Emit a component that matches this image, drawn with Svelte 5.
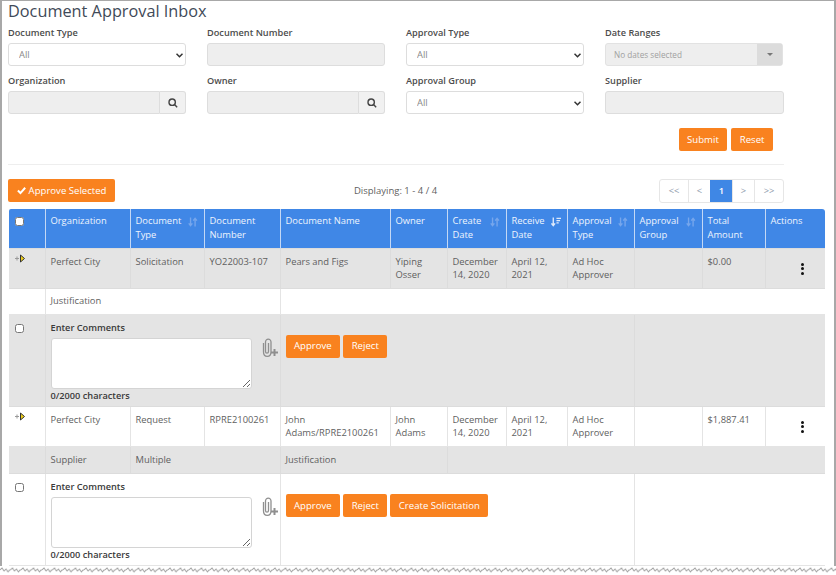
<script>
const columns = [
  { label: "Organization" },
  { label: "Document Type", sort: "none" },
  { label: "Document Number" },
  { label: "Document Name" },
  { label: "Owner" },
  { label: "Create Date", sort: "none" },
  { label: "Receive Date", sort: "desc" },
  { label: "Approval Type", sort: "none" },
  { label: "Approval Group", sort: "none" },
  { label: "Total Amount" },
  { label: "Actions" },
];
const widths = [36, 85, 74, 76, 110, 57, 59, 61, 67, 68, 63, 60];
const pages = ["<<", "<", "1", ">", ">>"];
const docs = [
  ["Perfect City", "Solicitation", "YO22003-107", "Pears and Figs", "Yiping Osser", "December 14, 2020", "April 12, 2021", "Ad Hoc Approver", "", "$0.00"],
  ["Perfect City", "Request", "RPRE2100261", "John Adams/RPRE2100261", "John Adams", "December 14, 2020", "April 12, 2021", "Ad Hoc Approver", "", "$1,887.41"],
];
</script>

{#snippet search()}
  <span class="addon">
    <svg width="10" height="10" viewBox="0 0 12 12" fill="none" stroke="#444" stroke-width="1.700">
      <circle cx="5" cy="5" r="3.800" /><path d="M7.800 7.800 11 11" />
    </svg>
  </span>
{/snippet}

{#snippet allSelect(id)}
  <div class="select-wrap">
    <select {id} class="control"><option>All</option></select>
    <svg class="chevron" width="7" height="5" viewBox="0 0 7 5" fill="none" stroke="#333" stroke-width="1.500">
      <path d="M.5 .8 3.500 3.800 6.500 .8" />
    </svg>
  </div>
{/snippet}

{#snippet docRow(doc, cls)}
  <tr class="doc {cls}">
    <td class="expand">
      <svg width="12" height="10" viewBox="0 0 12 10">
        <path d="M1 5.500h4M3 3.500v4" stroke="#999" stroke-width="1" />
        <path d="M6.500 2 10.500 5.500 6.500 9z" fill="#efcf1c" stroke="#333" stroke-width="1" />
      </svg>
    </td>
    {#each doc as value}
      <td>{value}</td>
    {/each}
    <td class="kebab"><i></i><i></i><i></i></td>
  </tr>
{/snippet}

{#snippet commentRow(cls, extra)}
  <tr class="comment {cls}">
    <td class="check"><input type="checkbox" /></td>
    <td colspan="3">
      <div class="comment-box">
        <div class="comment-main">
          <span class="comment-title">Enter Comments</span>
          <textarea></textarea>
          <span class="comment-count">0/2000 characters</span>
        </div>
        <svg class="clip" width="17" height="20" viewBox="0 0 17 20" fill="none" stroke="#8f8f8f">
          <path stroke-width="1.300" d="M2.500 5v9c0 5.800 7.500 5.800 7.500 0V4C10 .2 4.500 .2 4.500 4v9.500c0 2.200 3 2.200 3 0V5" />
          <path stroke-width="2" d="M10 14.500h7M13.500 11v7" />
        </svg>
      </div>
    </td>
    <td colspan="5" class="comment-actions">
      <div class="action-row">
        <button class="btn">Approve</button>
        <button class="btn">Reject</button>
        {#if extra}<button class="btn">{extra}</button>{/if}
      </div>
    </td>
    <td colspan="4"></td>
  </tr>
{/snippet}

<div class="page">
  <div class="frame">
    <h1>Document Approval Inbox</h1>

    <div class="filters">
      <div class="field">
        <label for="doc-type">Document Type</label>
        {@render allSelect("doc-type")}
      </div>
      <div class="field">
        <label for="doc-number">Document Number</label>
        <input id="doc-number" class="control readonly" disabled />
      </div>
      <div class="field">
        <label for="appr-type">Approval Type</label>
        {@render allSelect("appr-type")}
      </div>
      <div class="field">
        <label for="dates">Date Ranges</label>
        <div id="dates" class="dates">
          <span class="dates-text">No dates selected</span>
          <span class="dates-caret"><b></b></span>
        </div>
      </div>
      <div class="field">
        <label for="org">Organization</label>
        <div class="group">
          <input id="org" class="control readonly" disabled />
          {@render search()}
        </div>
      </div>
      <div class="field">
        <label for="owner">Owner</label>
        <div class="group">
          <input id="owner" class="control readonly" disabled />
          {@render search()}
        </div>
      </div>
      <div class="field">
        <label for="appr-group">Approval Group</label>
        {@render allSelect("appr-group")}
      </div>
      <div class="field">
        <label for="supplier">Supplier</label>
        <input id="supplier" class="control readonly supplier" disabled />
      </div>
    </div>

    <div class="form-actions">
      <button class="btn">Submit</button>
      <button class="btn">Reset</button>
    </div>

    <hr />

    <div class="toolbar">
      <button class="btn approve-all">
        <svg width="10" height="9" viewBox="0 0 10 9" fill="none" stroke="#fff" stroke-width="2.200">
          <path d="M1 4.500 3.800 7.300 9 1.500" />
        </svg>
        <span>Approve Selected</span>
      </button>
      <span class="displaying">Displaying: 1 - 4 / 4</span>
      <div class="pager">
        {#each pages as page}
          <span class:active={page === "1"}>{page}</span>
        {/each}
      </div>
    </div>

    <table>
      <colgroup>
        {#each widths as w}
          <col style="width: {w}px" />
        {/each}
      </colgroup>
      <thead>
        <tr>
          <th class="check"><input type="checkbox" /></th>
          {#each columns as col}
            <th>
              {col.label}
              {#if col.sort}
                <svg class="sort" class:on={col.sort === "desc"} width="10" height="10" viewBox="0 0 11 10" fill="none" stroke="currentColor" stroke-width="1.500">
                  {#if col.sort === "desc"}
                    <path d="M2.500 0v9M.5 6.500l2 2.500 2-2.500M6 1h5M6 3.500h4M6 6h2.500" />
                  {:else}
                    <path d="M2.800 0v9M.8 6.500l2 2.500 2-2.500M7.800 10V1M5.800 3.500l2-2.500 2 2.500" />
                  {/if}
                </svg>
              {/if}
            </th>
          {/each}
        </tr>
      </thead>
      <tbody>
        {@render docRow(docs[0], "grey")}
        <tr class="sub">
          <td></td>
          <td colspan="3">Justification</td>
          <td colspan="8"></td>
        </tr>
        {@render commentRow("grey", "")}
        {@render docRow(docs[1], "")}
        <tr class="sub grey">
          <td></td>
          <td>Supplier</td>
          <td colspan="2">Multiple</td>
          <td colspan="2">Justification</td>
          <td colspan="6"></td>
        </tr>
        {@render commentRow("", "Create Solicitation")}
      </tbody>
    </table>
  </div>

  <svg class="tear" width="836" height="9">
    <defs>
      <pattern id="zig" width="10.500" height="9" patternUnits="userSpaceOnUse">
        <path d="M0 4 2 2 4 5 6 3 8 6 9.500 4 10.500 4" fill="none" stroke="#a0a0a0" stroke-width="1" />
      </pattern>
    </defs>
    <rect width="836" height="9" fill="#fff" />
    <rect width="836" height="9" fill="url(#zig)" />
  </svg>
</div>

<style>
:global(body) {
  margin: 0;
  background: #fff;
}

.page {
  position: relative;
  width: 836px;
  height: 575px;
  overflow: hidden;
}

.frame {
  box-sizing: border-box;
  width: 836px;
  height: 575px;
  padding: 0 0 0 6px;
  border-top: 1px solid #a8a8a8;
  border-left: 2px solid #a8a8a8;
  border-right: 2px solid #a8a8a8;
  font-family: "Open Sans", sans-serif;
  font-size: 9.400px;
  color: #5f5f5f;
}

h1 {
  margin: 1px 0 0;
  font-size: 16.300px;
  font-weight: 400;
  line-height: 19px;
  color: #3f4a58;
}

.filters {
  display: grid;
  grid-template-columns: repeat(4, 178px);
  column-gap: 21px;
  row-gap: 8px;
  margin-top: 5px;
}

.field {
  display: flex;
  flex-direction: column;
  gap: 3px;
}

.field label {
  font-size: 9.200px;
  font-weight: 600;
  line-height: 14px;
  color: #4c4c4c;
}

.control {
  box-sizing: border-box;
  width: 100%;
  height: 23px;
  padding: 0 6px;
  border: 1px solid #ddd;
  border-radius: 3px;
  background: #fff;
  font: inherit;
  color: #888;
}

.select-wrap {
  position: relative;
  display: flex;
}

.select-wrap select {
  appearance: none;
  padding-left: 10px;
}

.chevron {
  position: absolute;
  top: 10px;
  right: 3px;
}

.readonly {
  background: #eee;
}

.supplier {
  width: 179px;
}

.group {
  display: flex;
}

.group .control {
  flex: 1;
  min-width: 0;
  border-radius: 3px 0 0 3px;
}

.addon {
  display: flex;
  align-items: center;
  justify-content: center;
  box-sizing: border-box;
  width: 26px;
  height: 23px;
  border: 1px solid #ddd;
  border-left: 0;
  border-radius: 0 3px 3px 0;
  background: #f1f1f1;
}

.dates {
  display: flex;
  box-sizing: border-box;
  height: 23px;
  border: 1px solid #e2e2e2;
  border-radius: 3px;
  background: #eee;
}

.dates-text {
  flex: 1;
  padding-left: 8px;
  font-size: 8.200px;
  line-height: 21px;
  color: #a0a0a0;
}

.dates-caret {
  display: flex;
  align-items: center;
  justify-content: center;
  width: 25px;
  background: #dcdcdc;
}

.dates-caret b {
  border: 3px solid transparent;
  border-top-color: #777;
  border-bottom: 0;
}

.form-actions {
  display: flex;
  justify-content: flex-end;
  gap: 4px;
  width: 765px;
  margin-top: 14px;
}

.btn {
  box-sizing: border-box;
  height: 23px;
  padding: 0 8.500px;
  border: 0;
  border-radius: 2px;
  background: #f9821f;
  font: inherit;
  font-size: 9.600px;
  color: #fff;
}

hr {
  width: 776px;
  margin: 13px 0 13px;
  border: 0;
  border-top: 1px solid #eee;
}

.toolbar {
  display: flex;
  align-items: center;
  width: 776px;
}

.approve-all {
  display: flex;
  flex-shrink: 0;
  align-items: center;
  gap: 3px;
  width: 107px;
  white-space: nowrap;
}

.displaying {
  flex: 1;
  padding-left: 17px;
  text-align: center;
  font-size: 9.500px;
}

.pager {
  display: flex;
  margin-top: 1px;
  border: 1px solid #e6e6e6;
  border-radius: 3px;
}

.pager span {
  box-sizing: border-box;
  width: 22px;
  height: 22px;
  border-left: 1px solid #e6e6e6;
  text-align: center;
  line-height: 21px;
  color: #8c99aa;
}

.pager span:first-child {
  width: 28px;
  border-left: 0;
}

.pager span:last-child {
  width: 29px;
}

.pager span.active {
  background: #3f87e5;
  border-color: #3f87e5;
  color: #fff;
  font-weight: 600;
}

table {
  width: 816px;
  margin: 6px 0 0 1px;
  table-layout: fixed;
  border-collapse: collapse;
}

thead tr {
  height: 39px;
}

th {
  position: relative;
  padding: 5px;
  vertical-align: top;
  text-align: left;
  font-weight: 400;
  line-height: 13.700px;
  background: #4087e6;
  color: #eef4fd;
  border-left: 1px solid #c4d8f5;
}

th:first-child {
  border-left: 0;
  border-top-left-radius: 2px;
}

th:last-child {
  border-top-right-radius: 3px;
}

.sort {
  position: absolute;
  top: 8px;
  right: 6px;
  color: #76a6ec;
}

.sort.on {
  color: #dfeafb;
}

td {
  padding: 6px 5px;
  vertical-align: top;
  line-height: 13.700px;
  border: 1px solid #e4e4e4;
}

td:first-child {
  border-left: 0;
}

td:last-child {
  border-right: 0;
}

.grey td {
  background: #e4e4e4;
  border-color: #dcdcdc;
}

tr.doc {
  height: 39.500px;
}

tr.doc.grey {
  height: 40.500px;
}

tr.sub {
  height: 25px;
}

tr.sub td {
  padding-top: 5px;
}

tr.sub.grey {
  height: 27px;
}

tr.sub.grey td {
  padding-top: 6px;
}

tr.comment {
  height: 92px;
}

tr.comment td {
  padding-bottom: 0;
}

.check input {
  display: block;
  width: 9px;
  height: 9px;
  margin: 0;
}

th.check {
  padding: 8px 0 0 6px;
}

td.check {
  padding: 9px 0 0 6px;
}

td.expand {
  padding: 4px 0 0 5px;
}

.expand svg {
  display: block;
}

td.kebab {
  padding: 14px 0 0 0;
}

.kebab i {
  display: block;
  width: 3px;
  height: 3px;
  margin: 0 0 1.500px 35px;
  border-radius: 50%;
  background: #111;
}

.comment-box {
  display: flex;
  gap: 9px;
}

.comment-main {
  display: flex;
  flex-direction: column;
  flex-shrink: 0;
  width: 201px;
  font-size: 9.200px;
  font-weight: 600;
  color: #3a3a3a;
}

.comment-title,
.comment-count {
  line-height: 14px;
}

.comment-title {
  margin-bottom: 3px;
}

textarea {
  box-sizing: border-box;
  display: block;
  width: 201px;
  height: 51px;
  border: 1px solid #d4d4d4;
  border-radius: 3px;
  background: #fff;
}

.clip {
  flex-shrink: 0;
  margin-top: 17px;
}

td.comment-actions {
  padding-top: 20px;
}

.action-row {
  display: flex;
  gap: 3px;
}

.tear {
  position: absolute;
  left: 0;
  top: 566px;
}
</style>
